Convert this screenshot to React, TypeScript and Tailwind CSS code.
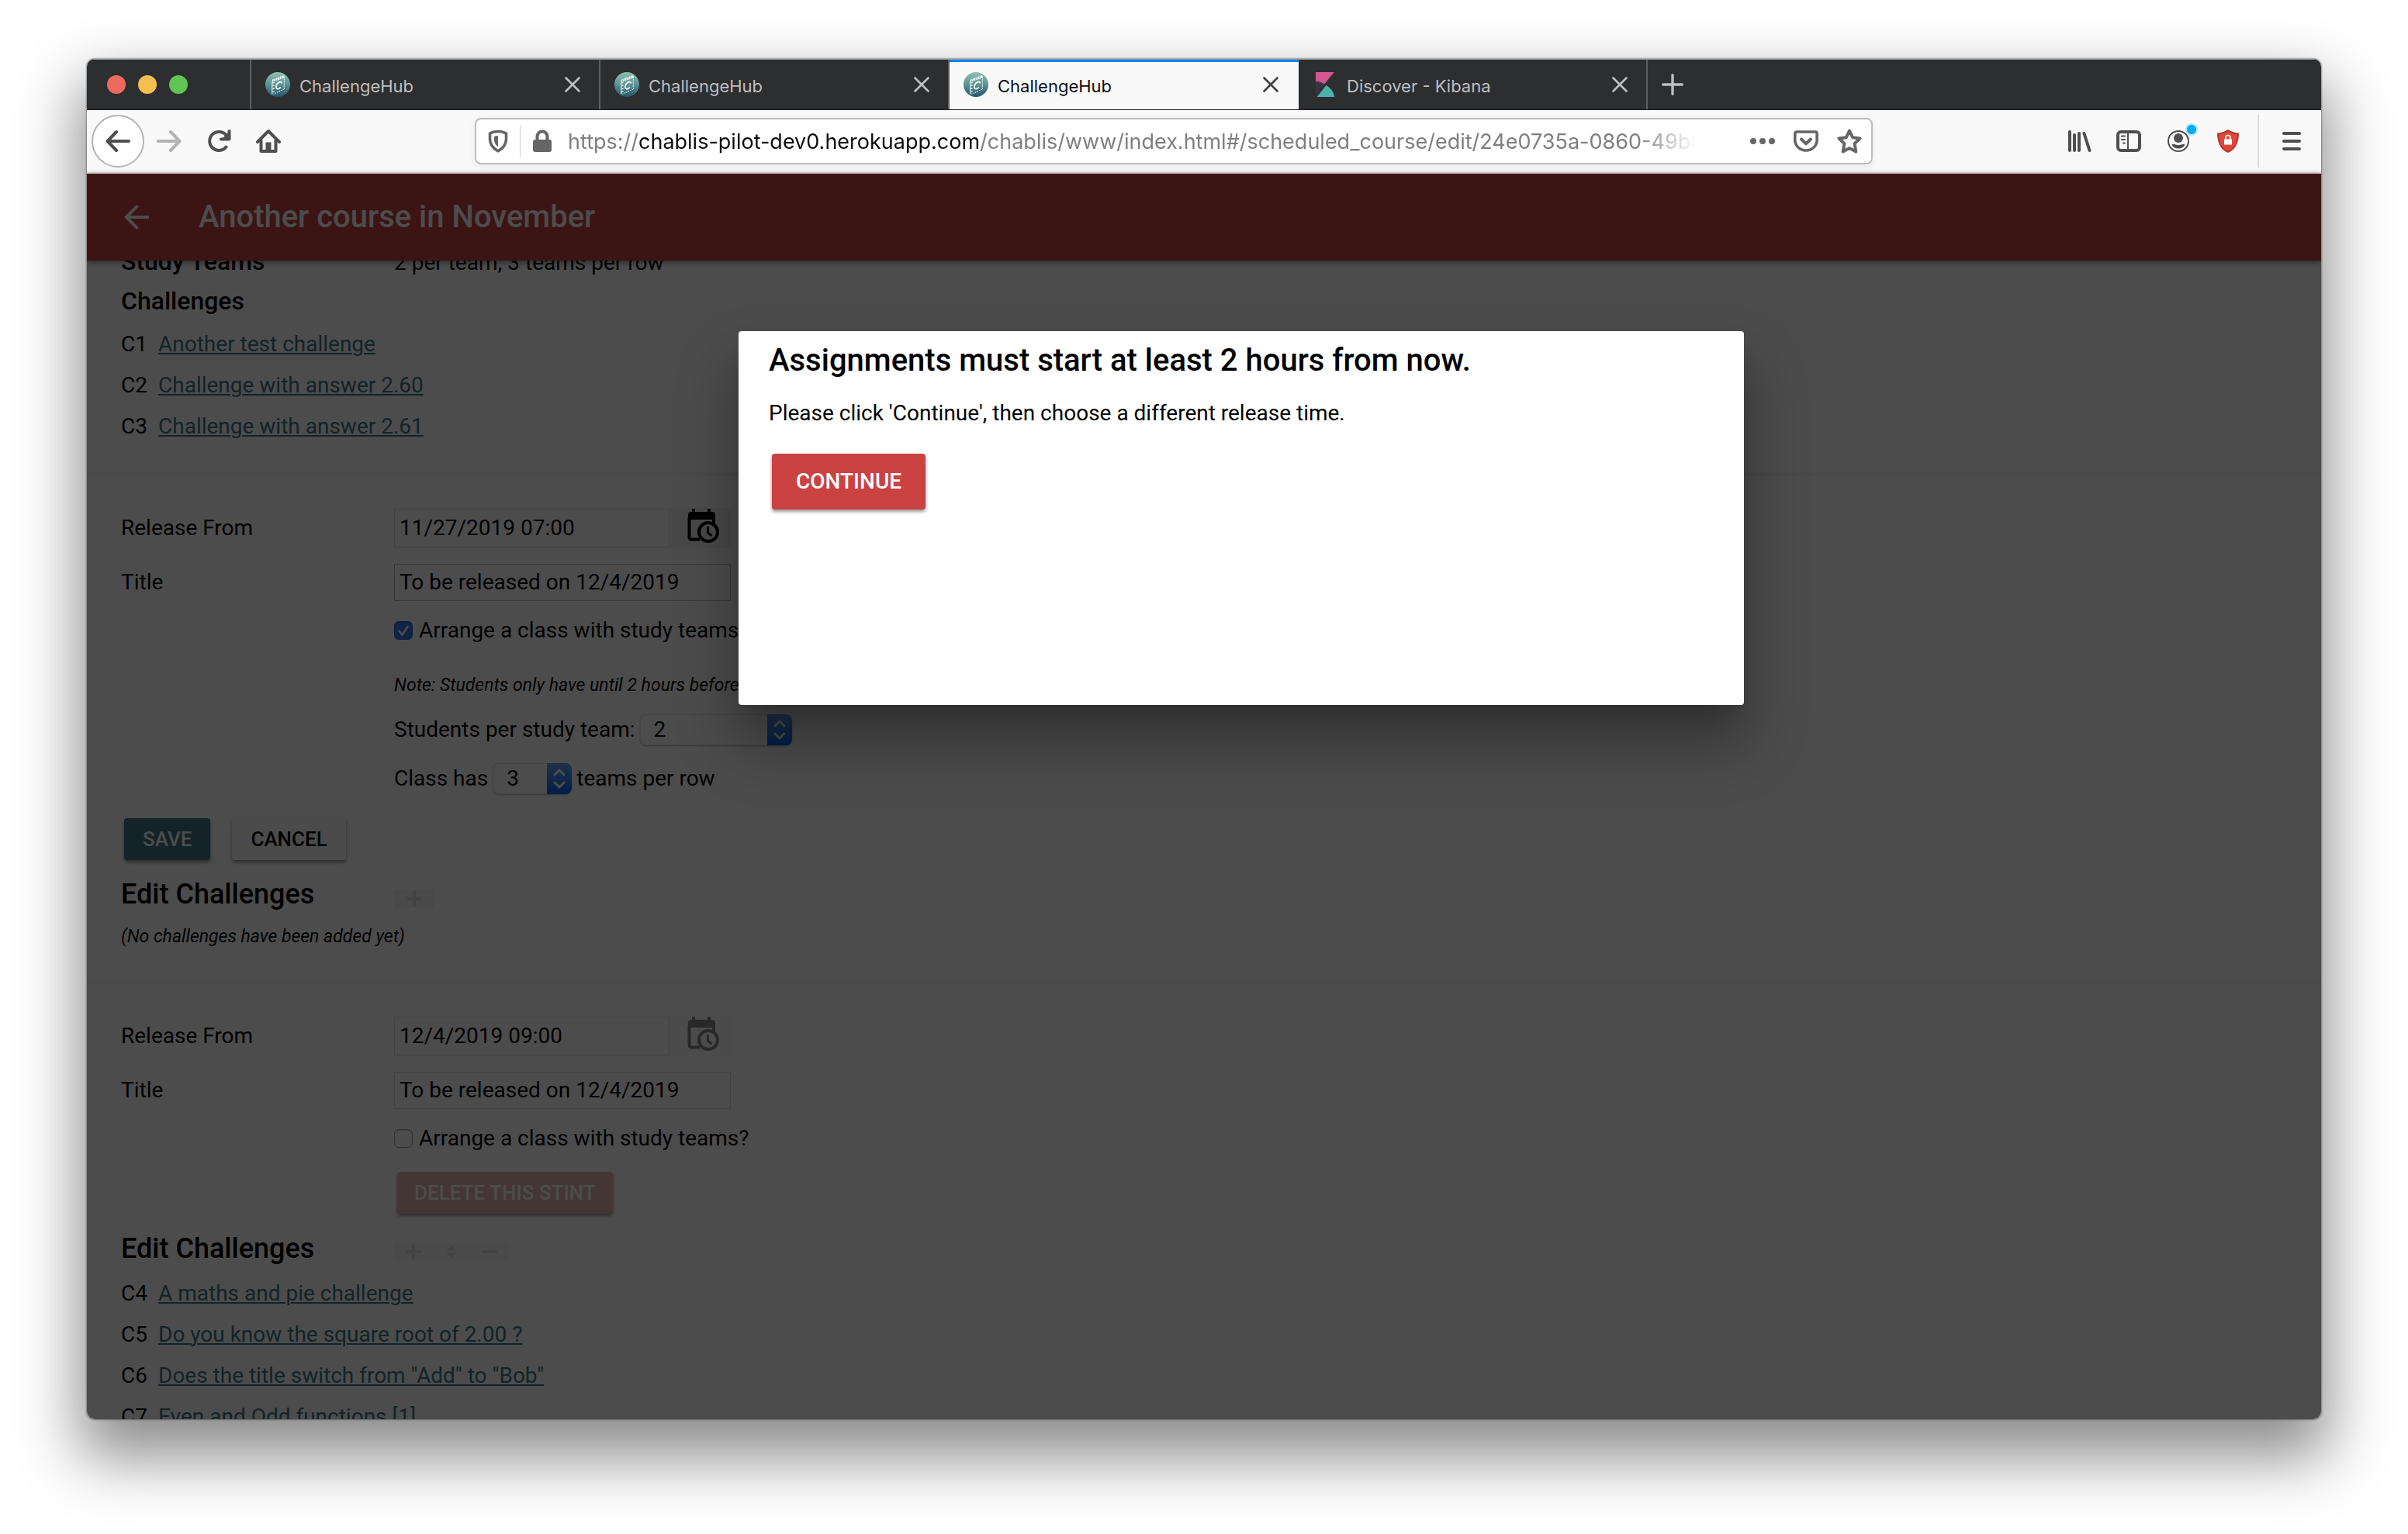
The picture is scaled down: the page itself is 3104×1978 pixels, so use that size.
import React from "react";

type IconProps = { className?: string };

const CloseIcon = ({ className = "" }: IconProps) => (
  <svg viewBox="0 0 20 20" className={`size-5 ${className}`} fill="none" stroke="currentColor" strokeWidth="2.600" strokeLinecap="round">
    <path d="M1.500 1.500l17 17M18.500 1.500l-17 17" />
  </svg>
);

const HubLogo = () => (
  <svg viewBox="0 0 32 32" className="size-8 shrink-0">
    <defs>
      <linearGradient id="hub" x1="0" y1="0" x2="0" y2="1">
        <stop offset="0" stopColor="#8fc0b0" />
        <stop offset="0.5" stopColor="#5a9494" />
        <stop offset="1" stopColor="#255468" />
      </linearGradient>
    </defs>
    <circle cx="16" cy="16" r="16" fill="url(#hub)" />
    <g fill="none" stroke="#fff">
      <path d="M8.500 12.500L24 7" strokeWidth="0.800" />
      <path d="M24.300 6v16" strokeWidth="0.900" strokeDasharray="2 0.800" />
      <path d="M24 22L10.500 28.300" strokeWidth="1.100" strokeDasharray="1.500 1.300" />
      <path d="M8.800 13v15.500" strokeWidth="1" />
      <path d="M10.500 13v15" strokeWidth="2.200" strokeDasharray="1.300 2.500" />
      <path d="M9 12l1.300-3M11.500 11l1.400-3M14 10l1.400-3M16.500 9.200l1.400-3M19 8.300l1.400-3M21.500 7.500l1.400-3M23.500 6.500l.6-2" strokeWidth="1.300" />
      <path d="M21.300 13.800c-.8-1.500-2.500-1.600-4-.6-2.200 1.500-3.700 4.600-3.200 7 .5 2 3 2 5.400-.4" strokeWidth="1.800" strokeLinecap="round" />
    </g>
  </svg>
);

const KibanaLogo = () => (
  <svg viewBox="-4 0 32 32" className="size-8 shrink-0">
    <path d="M0 0h24L11 15.500C7.500 13 3.500 12.200 0 12z" fill="#d2588f" />
    <path d="M0 12c3.500 0 7.500 1 11 3.500L1 29l-1 1z" fill="#343741" />
    <path d="M13.500 17C20 21 23.500 26 24 32H1.500z" fill="#4fb0a8" />
  </svg>
);

function Tab({ title, active, logo }: { title: string; active?: boolean; logo: React.ReactNode }) {
  return (
    <div
      className={
        active
          ? "flex w-[450px] shrink-0 items-center border-t-[3px] border-[#0a84ff] bg-[#f9f9fa] pb-[3px] pl-[18px] pr-[26px] text-[#0c0c0d]"
          : "flex w-[450px] shrink-0 items-center border-r-2 border-[#5c5d5f] pl-[18px] pr-6 text-[#bfbfc0]"
      }
    >
      {logo}
      <span className="ml-3 flex-1 pt-[3px] text-[22px] leading-8">{title}</span>
      <button aria-label={`Close ${title}`} className={active ? "text-[#3f3f41]" : ""}>
        <CloseIcon />
      </button>
    </div>
  );
}

function TabStrip() {
  return (
    <div className="flex h-[66px] shrink-0 items-stretch border-t border-b border-t-[#9a9b9c] border-b-[#1c1c1d] bg-[#2d2e30]">
      <div className="flex w-[212px] shrink-0 items-center gap-4 border-r-2 border-[#5c5d5f] pl-[26px]">
        <button aria-label="Close window" className="size-6 rounded-full bg-[#ed6a5e]" />
        <button aria-label="Minimise window" className="size-6 rounded-full bg-[#f5bf4f]" />
        <button aria-label="Zoom window" className="size-6 rounded-full bg-[#61c554]" />
      </div>
      <Tab title="ChallengeHub" logo={<HubLogo />} />
      <Tab title="ChallengeHub" logo={<HubLogo />} />
      <Tab title="ChallengeHub" active logo={<HubLogo />} />
      <Tab title="Discover - Kibana" logo={<KibanaLogo />} />
      <button aria-label="New tab" className="ml-[18px] flex items-center text-[#bfbfc0]">
        <svg viewBox="0 0 28 28" className="size-7" fill="none" stroke="currentColor" strokeWidth="3.400" strokeLinecap="round">
          <path d="M14 1.700v24.600M1.700 14h24.600" />
        </svg>
      </button>
    </div>
  );
}

const BackArrow = ({ className = "" }: IconProps) => (
  <svg viewBox="0 0 32 32" className={`size-8 ${className}`} fill="none" stroke="currentColor" strokeWidth="4" strokeLinecap="round" strokeLinejoin="round">
    <path d="M30 16H3M14 4L2.500 16 14 28" />
  </svg>
);

function Toolbar() {
  return (
    <div className="flex h-[82px] shrink-0 items-center border-b-2 border-[#dcdcdc] bg-[#f9f9fa] text-[#4f4f50]">
      <button aria-label="Back" className="ml-[6px] flex size-[68px] items-center justify-center rounded-full border-2 border-[#b4b4b4] bg-white">
        <BackArrow />
      </button>
      <button aria-label="Forward" className="ml-4 text-[#b3b3b4]">
        <BackArrow className="rotate-180" />
      </button>
      <button aria-label="Reload" className="ml-8">
        <svg viewBox="0 0 32 32" className="size-8" fill="none" stroke="currentColor" strokeWidth="4" strokeLinecap="round" strokeLinejoin="round">
          <path d="M25.500 23.500A12 12 0 1 1 26 9" />
          <path d="M29.500 3v10.500H19" />
          <path d="M29.500 3v10.500H20z" fill="currentColor" stroke="none" />
        </svg>
      </button>
      <button aria-label="Home" className="ml-8">
        <svg viewBox="0 0 32 32" className="size-8" fill="none" stroke="currentColor" strokeWidth="4" strokeLinecap="round" strokeLinejoin="round">
          <path d="M2 17L16 3l14 14" />
          <path d="M6.500 15v14h19V15" />
          <path d="M12.500 29V17.500h7V29z" fill="currentColor" stroke="none" />
        </svg>
      </button>
      <div className="ml-[250px] flex h-[60px] w-[1802px] items-center rounded-lg border-2 border-[#bdbdbd] bg-white text-[#666667] shadow-[0_2px_8px_rgba(0,0,0,0.08)]">
        <button aria-label="Tracking protection" className="ml-3">
          <svg viewBox="0 0 32 32" className="size-8" fill="none" stroke="currentColor" strokeWidth="3.600" strokeLinejoin="round">
            <path d="M16 3.500c4 0 7.500 1 10.500 2.300v7.500c0 7-4 12-10.500 15.500-6.500-3.500-10.500-8.500-10.500-15.500V5.800C8.500 4.500 12 3.500 16 3.500z" />
            <path d="M16 9c-2 .1-4 .5-5 1v4c0 4 2 7.500 5 9.500z" fill="currentColor" stroke="none" />
          </svg>
        </button>
        <span className="ml-3 h-[42px] w-px bg-[#d0d0d0]" />
        <button aria-label="Connection secure" className="ml-3">
          <svg viewBox="0 0 32 32" className="size-8" fill="none" stroke="currentColor" strokeWidth="4">
            <rect x="4" y="14" width="24" height="16" rx="3" fill="currentColor" stroke="none" />
            <path d="M9.500 15V10a6.500 6.500 0 0 1 13 0v5" />
          </svg>
        </button>
        <div className="ml-[17px] flex-1 overflow-hidden pt-[2px] whitespace-nowrap text-[27px] leading-9 text-[#7f7f80] [mask-image:linear-gradient(to_right,black_1380px,transparent_1455px)]">
          https://<span className="text-[#0c0c0d]">chablis-pilot-dev0.herokuapp.com</span>/chablis/www/index.html#/scheduled_course/edit/24e0735a-0860-49b8
        </div>
        <div className="mr-3 flex shrink-0 items-center gap-6">
          <button aria-label="Page actions">
            <svg viewBox="0 0 32 32" className="size-8" fill="currentColor">
              <circle cx="4" cy="16" r="4" />
              <circle cx="16" cy="16" r="4" />
              <circle cx="28" cy="16" r="4" />
            </svg>
          </button>
          <button aria-label="Save to Pocket">
            <svg viewBox="0 0 32 32" className="size-8" fill="none" stroke="currentColor" strokeWidth="4" strokeLinecap="round" strokeLinejoin="round">
              <path d="M3.800 4h24.400a2 2 0 0 1 2 2v8.500a14.200 13.500 0 0 1-28.400 0V6a2 2 0 0 1 2-2z" strokeWidth="3.600" />
              <path d="M10 13.500l6 5.800 6-5.800" />
            </svg>
          </button>
          <button aria-label="Bookmark">
            <svg viewBox="0 0 32 32" className="size-8" fill="none" stroke="currentColor" strokeWidth="4" strokeLinejoin="round">
              <path d="M16 2.500l4.100 8.700 9.400 1.300-6.900 6.600 1.700 10.400L16 25l-8.300 4.500 1.700-10.400-6.900-6.600 9.400-1.300z" />
            </svg>
          </button>
        </div>
      </div>
      <div className="ml-auto mr-[22px] flex items-center">
        <button aria-label="Library">
          <svg viewBox="0 0 32 32" className="size-8" fill="none" stroke="currentColor" strokeWidth="4" strokeLinecap="round">
            <path d="M4 4v24M10 8v20M16 6v22M22.500 6l7 22" />
          </svg>
        </button>
        <button aria-label="Sidebars" className="ml-8">
          <svg viewBox="0 0 32 32" className="size-8" fill="none" stroke="currentColor" strokeWidth="4" strokeLinecap="round">
            <rect x="2" y="4" width="28" height="24" rx="4" />
            <path d="M15 4v24" strokeWidth="2" />
            <path d="M7 9.500h4M7 14h4M9 18.500h2" strokeWidth="2" />
          </svg>
        </button>
        <button aria-label="Account" className="relative ml-8">
          <svg viewBox="0 0 32 32" className="size-8" fill="currentColor">
            <circle cx="16" cy="16" r="13" fill="none" stroke="currentColor" strokeWidth="2" />
            <circle cx="16" cy="12" r="6" />
            <path d="M8 19.500c2.500 0 4 1.500 8 1.500s5.500-1.500 8-1.500c.5 3.500-3 6-8 6s-8.500-2.500-8-6z" />
          </svg>
          <span className="absolute -right-[7px] -top-[5px] size-3 rounded-full bg-[#00aaff] ring-2 ring-[#b3e6ff]" />
        </button>
        <button aria-label="Ad blocker" className="ml-8">
          <svg viewBox="0 0 32 32" className="size-8">
            <path d="M16 1c4 2.500 9 4.500 14 4.500C30 17 26 27 16 31 6 27 2 17 2 5.500 7 5.500 12 3.500 16 1z" fill="#b5342a" />
            <path d="M16 3.500c4 2.300 8 3.700 12 4C27.500 17.500 24 25.500 16 28.800 8 25.500 4.500 17.500 4 7.500c4-.3 8-1.700 12-4z" fill="#e0483b" />
            <rect x="11" y="13.500" width="10" height="7" fill="#fff" />
            <path d="M13 14v-2.500a3 3 0 0 1 6 0V14" fill="none" stroke="#fff" strokeWidth="1.600" />
          </svg>
        </button>
        <span className="ml-[22px] h-[68px] w-[2px] bg-[#dcdcdc]" />
        <button aria-label="Menu" className="ml-[26px]">
          <svg viewBox="0 0 32 32" className="size-8" stroke="currentColor" strokeWidth="4" strokeLinecap="round">
            <path d="M6 6h20M6 16h20M6 26h20" />
          </svg>
        </button>
      </div>
    </div>
  );
}

const CalendarIcon = () => (
  <svg viewBox="0 0 42 46" className="h-[46px] w-[42px]" fill="none" stroke="currentColor">
    <path d="M9 1v8M29 1v8" strokeWidth="4" />
    <path d="M2 19V9a4 4 0 0 1 4-4h27a4 4 0 0 1 4 4v10H33v-4H5v4z" fill="currentColor" stroke="none" />
    <path d="M3.500 12v26a2.500 2.500 0 0 0 2.500 2.500h11M35 12v8" strokeWidth="4" />
    <circle cx="28" cy="31" r="12" strokeWidth="4" />
    <path d="M27.500 24v8l5 4" strokeWidth="3" />
  </svg>
);

const Stepper = () => (
  <svg viewBox="0 0 32 40" className="pointer-events-none col-start-1 row-start-1 h-10 w-8 justify-self-end" fill="none">
    <defs>
      <linearGradient id="step" x1="0" y1="0" x2="0" y2="1">
        <stop offset="0" stopColor="#6aa6f8" />
        <stop offset="1" stopColor="#0563f2" />
      </linearGradient>
    </defs>
    <path d="M0 0h24a8 8 0 0 1 8 8v24a8 8 0 0 1-8 8H0z" fill="url(#step)" />
    <path d="M10 15l6-6 6 6M10 25l6 6 6-6" stroke="#fff" strokeWidth="3" strokeLinecap="round" strokeLinejoin="round" />
  </svg>
);

function Picker({ id, value, wide }: { id: string; value: string; wide?: boolean }) {
  return (
    <span className={wide ? "grid w-[196px]" : "grid w-[102px]"}>
      <select
        id={id}
        defaultValue={value}
        className="col-start-1 row-start-1 h-10 appearance-none rounded-lg border border-[#e6e6e6] bg-white pl-[17px] shadow-[0_1px_2px_rgba(0,0,0,0.3)]"
      >
        <option>{value}</option>
      </select>
      <Stepper />
    </span>
  );
}

function ChallengeList({ items }: { items: [string, string][] }) {
  return (
    <ul>
      {items.map(([code, name]) => (
        <li key={code} className="flex h-[53px] items-center gap-3">
          <span className="w-9">{code}</span>
          <a href="#" className="text-[#417583] underline decoration-2 underline-offset-2">
            {name}
          </a>
        </li>
      ))}
    </ul>
  );
}

function ReleaseFields({ id, date, muted, checked }: { id: string; date: string; muted?: boolean; checked?: boolean }) {
  return (
    <>
      <div className="flex h-[52px] items-center">
        <label htmlFor={`${id}-date`} className="w-[352px] shrink-0">
          Release From
        </label>
        <input id={`${id}-date`} defaultValue={date} className="h-[50px] w-[355px] border border-[#e0e0e0] bg-white px-[6px] pb-[2px]" />
        <button
          aria-label="Choose release time"
          className={
            muted
              ? "ml-px flex h-[52px] w-[79px] items-start justify-center bg-[#fafafa] pl-1 text-[#888]"
              : "ml-px flex h-[52px] w-[79px] items-start justify-center bg-[#f0f0f0] pl-1 text-black"
          }
        >
          <CalendarIcon />
        </button>
      </div>
      <div className="mt-5 flex h-12 items-center">
        <label htmlFor={`${id}-title`} className="w-[352px] shrink-0">
          Title
        </label>
        <input
          id={`${id}-title`}
          defaultValue="To be released on 12/4/2019"
          className={muted ? "h-12 w-[434px] border border-[#dcdcdc] bg-white px-[6px] pb-px" : "h-12 w-[434px] border border-[#b4b4b4] bg-white px-[6px] pb-px"}
        />
      </div>
      <div className="ml-[352px] mt-[18px] flex h-10 items-center gap-2">
        <span className="grid size-6">
          <input
            id={`${id}-arrange`}
            type="checkbox"
            defaultChecked={checked}
            className="col-start-1 row-start-1 size-6 appearance-none rounded-md border border-[#a0a0a0] bg-white shadow-[inset_0_1px_2px_rgba(0,0,0,0.15)] checked:border-[#2a6de0] checked:bg-[#3a7bea]"
          />
          {checked && (
            <svg viewBox="0 0 24 24" className="pointer-events-none col-start-1 row-start-1 size-6" fill="none" stroke="#fff" strokeWidth="2.600" strokeLinecap="round" strokeLinejoin="round">
              <path d="M6.500 12.500l4 5L17.500 7" />
            </svg>
          )}
        </span>
        <label htmlFor={`${id}-arrange`}>Arrange a class with study teams?</label>
      </div>
    </>
  );
}

const PlusMark = () => (
  <svg viewBox="0 0 20 20" className="size-5" stroke="currentColor" strokeWidth="4">
    <path d="M10 0v20M0 10h20" />
  </svg>
);

const button = "rounded-[4px] text-[26px] leading-8 font-medium uppercase shadow-[0_3px_4px_rgba(0,0,0,0.4)]";

function Course() {
  return (
    <main className="flex-1 overflow-hidden bg-white px-11 text-[28px] leading-9 text-black">
      <div className="-mt-[17px] flex h-10 items-baseline">
        <h3 className="w-[352px] text-[32px] font-medium">Study Teams</h3>
        <span>2 per team; 3 teams per row</span>
      </div>
      <h3 className="mt-[7px] flex h-11 items-center text-[32px] font-medium">Challenges</h3>
      <div className="mt-[7px]">
        <ChallengeList
          items={[
            ["C1", "Another test challenge"],
            ["C2", "Challenge with answer 2.60"],
            ["C3", "Challenge with answer 2.61"],
          ]}
        />
      </div>
      <hr className="-mx-11 mt-[33px] h-1 border-0 bg-[#f0f0f0]" />

      <section className="pt-[42px]">
        <ReleaseFields id="first" date="11/27/2019 07:00" checked />
        <p className="ml-[352px] mt-[35px] whitespace-nowrap text-[23px] leading-8 italic">
          Note: Students only have until 2 hours before the release time to join a study team
        </p>
        <div className="ml-[352px] mt-[21px] flex h-10 items-center gap-[6px]">
          <label htmlFor="per-team">Students per study team:</label>
          <Picker id="per-team" value="2" wide />
        </div>
        <div className="ml-[352px] mt-[23px] flex h-10 items-center gap-[6px]">
          <label htmlFor="per-row">Class has</label>
          <Picker id="per-row" value="3" />
          <span>teams per row</span>
        </div>
        <div className="ml-1 mt-[31px] flex h-[54px] gap-7">
          <button className={`${button} bg-[#417583] px-6 text-white`}>Save</button>
          <button className={`${button} bg-[#fafafa] px-6`}>Cancel</button>
        </div>
        <div className="mt-[19px] flex h-[50px] items-center">
          <h2 className="w-[352px] text-[36px] font-medium">Edit Challenges</h2>
          <button aria-label="Add challenge" className="mt-3 flex h-6 w-[51px] items-center justify-center bg-[#f5f5f5] text-[#dcdcdc]">
            <PlusMark />
          </button>
        </div>
        <p className="mt-[14px] text-[23px] leading-8 italic">(No challenges have been added yet)</p>
      </section>
      <hr className="-mx-11 mt-10 h-1 border-0 bg-[#f0f0f0]" />

      <section className="pt-[42px]">
        <ReleaseFields id="second" date="12/4/2019 09:00" muted />
        <div className="ml-[356px] mt-[23px] flex h-[54px]">
          <button className={`${button} bg-[#e6b0b0] px-[22px] text-white opacity-95`}>Delete this stint</button>
        </div>
        <div className="mt-5 flex h-[50px] items-center">
          <h2 className="w-[352px] text-[36px] font-medium">Edit Challenges</h2>
          <div className="mt-2 flex h-6 items-center bg-[#f8f8f8] text-[#e0e0e0]">
            <button aria-label="Add challenge" className="flex w-[49px] justify-center">
              <PlusMark />
            </button>
            <button aria-label="Reorder challenges" className="flex w-[49px] justify-center">
              <svg viewBox="0 0 14 18" className="h-[18px] w-[14px]" fill="currentColor">
                <path d="M7 0l6.500 7.500H.5zM7 18l6.500-7.500H.5z" />
              </svg>
            </button>
            <button aria-label="Remove challenge" className="flex w-[49px] justify-center">
              <svg viewBox="0 0 20 4" className="h-1 w-5" fill="currentColor">
                <path d="M0 0h20v4H0z" />
              </svg>
            </button>
          </div>
        </div>
        <div className="mt-[6px]">
          <ChallengeList
            items={[
              ["C4", "A maths and pie challenge"],
              ["C5", "Do you know the square root of 2.00 ?"],
              ["C6", 'Does the title switch from "Add" to "Bob"'],
              ["C7", "Even and Odd functions [1]"],
            ]}
          />
        </div>
      </section>
    </main>
  );
}

export default function App() {
  return (
    <div className="h-screen bg-white px-28 pb-[148px] pt-[76px]">
      <div className="flex h-full flex-col overflow-hidden rounded-[10px] font-['Inter',sans-serif] shadow-[0_0_2px_1px_rgba(0,0,0,0.35),0_40px_80px_10px_rgba(0,0,0,0.45)]">
        <TabStrip />
        <Toolbar />
        <div className="relative flex min-h-0 flex-1 flex-col font-['Roboto',sans-serif]">
          <header className="z-10 flex h-28 shrink-0 items-center bg-[#c84343] pl-12 text-white shadow-[0_2px_8px_rgba(0,0,0,0.5)]">
            <a href="#" aria-label="Back to courses">
              <svg viewBox="0 0 32 32" className="size-8" fill="currentColor">
                <path d="M32 14H7.700L18.800 2.800 16 0 0 16l16 16 2.800-2.800L7.700 18H32z" />
              </svg>
            </a>
            <h1 className="ml-16 text-[40px] leading-[48px] font-medium">Another course in November</h1>
          </header>
          <Course />
          <div className="absolute inset-0 z-20 bg-black/70">
            <div
              role="dialog"
              aria-labelledby="dialog-title"
              className="ml-[840px] mt-[203px] h-[482px] w-[1296px] rounded-[4px] bg-white px-[39px] pt-3 text-[28px] leading-9 text-black shadow-[0_48px_76px_6px_rgba(0,0,0,0.3),0_22px_30px_-14px_rgba(0,0,0,0.2)]"
            >
              <h2 id="dialog-title" className="text-[40px] leading-[52px] font-medium">
                Assignments must start at least 2 hours from now.
              </h2>
              <p className="mt-6">Please click 'Continue', then choose a different release time.</p>
              <button className="ml-1 mt-[34px] h-[72px] rounded-[4px] bg-[#ca4242] px-[31px] font-medium text-white uppercase shadow-[0_3px_4px_rgba(0,0,0,0.4)]">
                Continue
              </button>
            </div>
          </div>
        </div>
      </div>
    </div>
  );
}
